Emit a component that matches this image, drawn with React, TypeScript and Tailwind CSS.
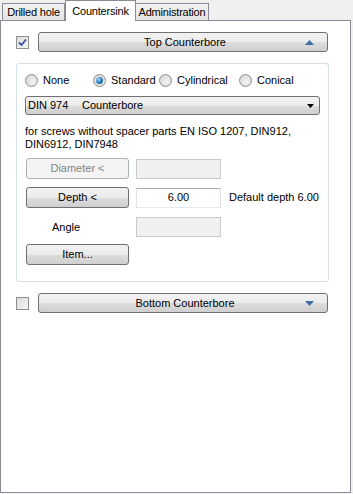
import React from 'react';

const btn =
  'flex items-center justify-center rounded-[3px] border border-[#707070] bg-[linear-gradient(#f2f2f2,#ebebeb_50%,#dddddd_50%,#cfcfcf)] text-black';
const btnDisabled =
  'flex items-center justify-center rounded-[3px] border border-[#adb2b5] bg-[#f4f4f4] text-[#838383]';

function Check({ checked }: { checked?: boolean }) {
  return (
    <div className="flex h-[13px] w-[13px] items-center justify-center border border-[#8e8f8f] bg-[linear-gradient(135deg,#dcdcdc,#f6f6f6)]">
      {checked && (
        <svg width="9" height="9" viewBox="0 0 9 9">
          <path d="M1 4.5 L3.5 7 L8 1.5" fill="none" stroke="#3a4fa8" strokeWidth="1.8" />
        </svg>
      )}
    </div>
  );
}

function Radio({ label, checked, w }: { label: string; checked?: boolean; w: string }) {
  return (
    <div className={`flex items-center ${w}`}>
      <div className="flex h-[13px] w-[13px] items-center justify-center rounded-full border border-[#8e8f8f] bg-[radial-gradient(circle_at_60%_60%,#f4f4f4,#d0d0d0)]">
        {checked && (
          <div className="h-[7px] w-[7px] rounded-full bg-[radial-gradient(circle_at_35%_35%,#9fd8ff,#1c6fb8_60%,#0f4a8a)]" />
        )}
      </div>
      <span className="ml-[5px]">{label}</span>
    </div>
  );
}

function Arrow({ up }: { up?: boolean }) {
  return (
    <svg width="9" height="5" viewBox="0 0 9 5" className="absolute right-[13px] top-[7px]">
      <path d={up ? 'M0 5 L4.5 0 L9 5 Z' : 'M0 0 L9 0 L4.5 5 Z'} fill="#3d6fa5" />
    </svg>
  );
}

export default function App() {
  return (
    <div className="h-[494px] w-[353px] bg-[#f0f0f0] font-['Liberation_Sans',Arial,sans-serif] text-[11px] text-black">
      <div className="relative z-10 flex h-[21px] items-end pl-[2px] tracking-[-0.2px]">
        <div className="mb-px flex h-[17px] w-[63px] items-center justify-center border border-b-0 border-[#898c95] bg-[linear-gradient(#f2f2f2,#e3e3e3)]">
          Drilled hole
        </div>
        <div className="flex h-[21px] w-[71px] items-start justify-center border border-b-0 border-[#898c95] bg-white pt-[2px]">
          Countersink
        </div>
        <div className="mb-px flex h-[17px] w-[73px] items-center justify-center border border-b-0 border-l-0 border-[#898c95] bg-[linear-gradient(#f2f2f2,#e3e3e3)]">
          Administration
        </div>
      </div>
      <div className="-mt-px h-[473px] w-[351px] border border-[#898c95] bg-white pl-[15px] pt-[11px]">
        <div className="flex h-[20px] items-center">
          <Check checked />
          <div className={`${btn} relative ml-[9px] h-[20px] w-[290px]`}>
            <span className="ml-[4px]">Top Counterbore</span>
            <Arrow up />
          </div>
        </div>

        <div className="mt-[11px] h-[219px] w-[313px] rounded-[3px] border border-[#d5dfe5] pl-[8px] pt-[8px]">
          <div className="flex h-[16px] items-center">
            <Radio label="None" w="w-[68px]" />
            <Radio label="Standard" checked w="w-[66px]" />
            <Radio label="Cylindrical" w="w-[80px]" />
            <Radio label="Conical" w="w-[70px]" />
          </div>
          <div className={`${btn} relative mt-[8px] h-[19px] w-[295px] !justify-start pl-[2px]`}>
            <span className="w-[54px]">DIN 974</span>
            <span>Counterbore</span>
            <svg width="7" height="4" viewBox="0 0 7 4" className="absolute right-[5px] top-[7px]">
              <path d="M0 0 L7 0 L3.5 4 Z" fill="#000" />
            </svg>
          </div>
          <div className="mt-[10px] leading-[13px]">
            <div className="whitespace-nowrap">for screws without spacer parts EN ISO 1207, DIN912,</div>
            <div className="whitespace-nowrap">DIN6912, DIN7948</div>
          </div>

          <div className="mt-[7px] flex h-[21px] items-center">
            <div className={`${btnDisabled} ml-px h-[21px] w-[103px]`}>Diameter &lt;</div>
            <div className="ml-[7px] h-[20px] w-[85px] border border-[#c9cacc] bg-[#f0f0f0]" />
          </div>
          <div className="mt-[8px] flex h-[21px] items-center">
            <div className={`${btn} ml-px h-[21px] w-[103px]`}>Depth &lt;</div>
            <div className="ml-[7px] flex h-[20px] w-[85px] items-center justify-center border border-[#abadb3] border-l-[#e2e3ea] border-r-[#dbdfe6] border-b-[#e3e9ef] bg-white">
              6.00
            </div>
            <span className="ml-[8px]">Default depth 6.00</span>
          </div>
          <div className="mt-[9px] flex h-[20px] items-center">
            <div className="ml-px flex w-[103px] pl-[26px]">Angle</div>
            <div className="ml-[7px] h-[20px] w-[85px] border border-[#c9cacc] bg-[#f0f0f0]" />
          </div>
          <div className={`${btn} ml-px mt-[7px] h-[21px] w-[103px]`}>Item...</div>
        </div>

        <div className="mt-[11px] flex h-[20px] items-center">
          <Check />
          <div className={`${btn} relative ml-[9px] h-[20px] w-[290px]`}>
            <span className="ml-[4px]">Bottom Counterbore</span>
            <Arrow />
          </div>
        </div>
      </div>
    </div>
  );
}
